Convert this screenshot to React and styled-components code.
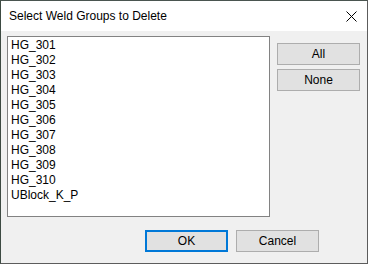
import React from "react";
import styled, { createGlobalStyle } from "styled-components";

const GlobalStyle = createGlobalStyle`
  html, body {
    margin: 0;
    padding: 0;
    background: #3c4a44;
  }
  * {
    box-sizing: border-box;
  }
`;

const Window = styled.div`
  width: 368px;
  height: 264px;
  border: 1px solid #5c5c5c;
  border-top-color: #4a5550;
  border-left-color: #3d4a42;
  background: #f0f0f0;
  display: flex;
  flex-direction: column;
  font-family: "Liberation Sans", Arial, sans-serif;
  font-size: 12px;
  color: #000;
`;

const TitleBar = styled.div`
  height: 30px;
  background: #fff;
  display: flex;
  align-items: center;
  justify-content: space-between;
  padding-left: 8px;
`;

const Title = styled.span`
  font-size: 12px;
  line-height: 14px;
`;

const CloseButton = styled.div`
  width: 32px;
  height: 30px;
  display: flex;
  align-items: center;
  justify-content: center;
`;

const Body = styled.div`
  flex: 1;
  padding: 5px 0 0 6px;
  display: flex;
  flex-direction: column;
`;

const Top = styled.div`
  display: flex;
  gap: 7px;
`;

const ListBox = styled.div`
  width: 263px;
  height: 181px;
  background: #fff;
  border: 1px solid #828282;
  padding: 1px 0 0 3px;
`;

const Item = styled.div`
  height: 15px;
  line-height: 15px;
  white-space: nowrap;
`;

const SideButtons = styled.div`
  display: flex;
  flex-direction: column;
  gap: 4px;
  padding-top: 7px;
`;

const Button = styled.button`
  width: 83px;
  height: 22px;
  padding: 0;
  background: #e1e1e1;
  border: ${(p) => (p.$default ? "2px solid #0078d7" : "1px solid #adadad")};
  font-family: inherit;
  font-size: 12px;
  color: #000;
  line-height: 14px;
`;

const Footer = styled.div`
  display: flex;
  gap: 8px;
  padding: 13px 0 0 138px;
`;

const items = [
  "HG_301",
  "HG_302",
  "HG_303",
  "HG_304",
  "HG_305",
  "HG_306",
  "HG_307",
  "HG_308",
  "HG_309",
  "HG_310",
  "UBlock_K_P",
];

export default function App() {
  return (
    <>
      <GlobalStyle />
      <Window>
        <TitleBar>
          <Title>Select Weld Groups to Delete</Title>
          <CloseButton>
            <svg width="11" height="11" viewBox="0 0 11 11">
              <path d="M0.5 0.5 L10.5 10.5 M10.5 0.5 L0.5 10.5" stroke="#000" strokeWidth="1" />
            </svg>
          </CloseButton>
        </TitleBar>
        <Body>
          <Top>
            <ListBox>
              {items.map((name) => (
                <Item key={name}>{name}</Item>
              ))}
            </ListBox>
            <SideButtons>
              <Button>All</Button>
              <Button>None</Button>
            </SideButtons>
          </Top>
          <Footer>
            <Button $default>OK</Button>
            <Button>Cancel</Button>
          </Footer>
        </Body>
      </Window>
    </>
  );
}
